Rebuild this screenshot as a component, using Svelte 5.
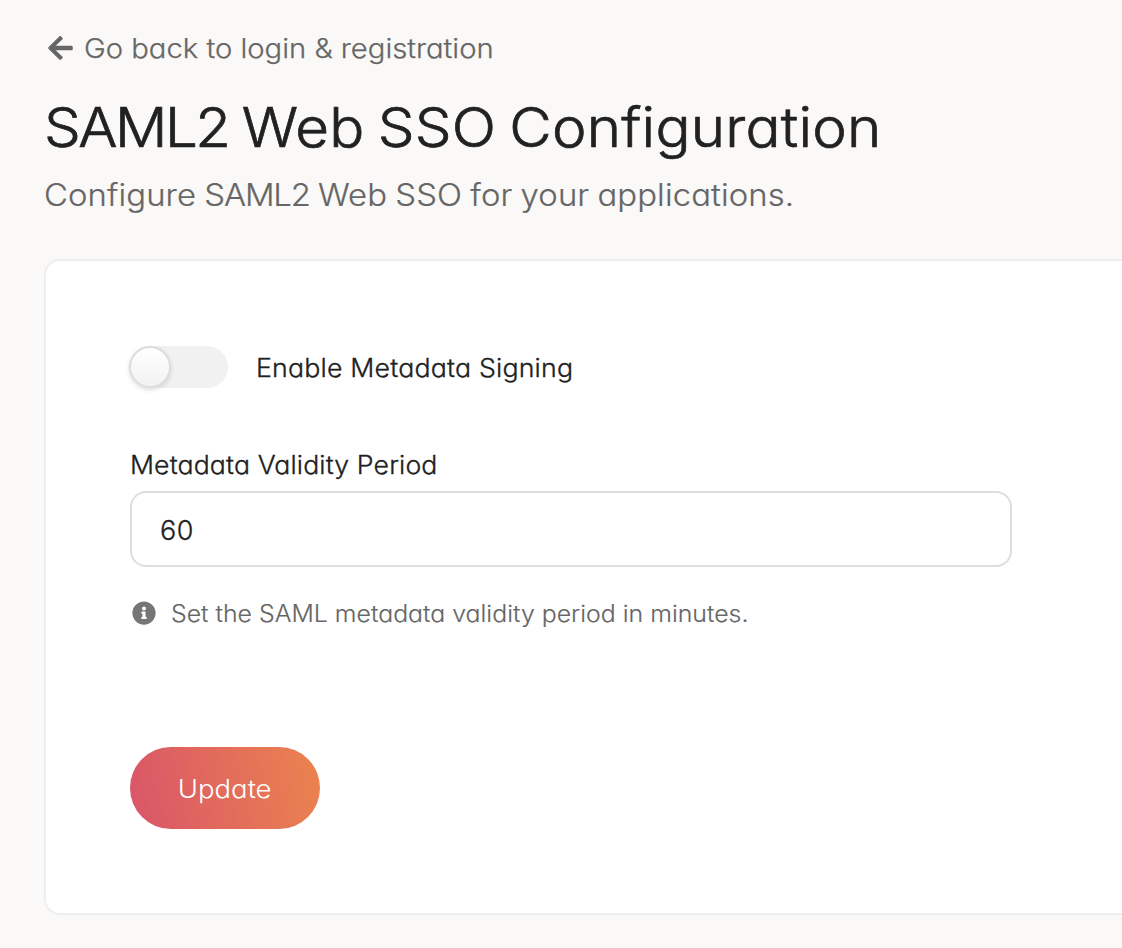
<script>
  let signing = $state(false);
  let period = $state('60');
</script>

<main>
  <a class="back" href="#login">
    <svg viewBox="0 0 448 512" aria-hidden="true"><path d="M257.5 445.1l-22.2 22.2c-9.4 9.4-24.6 9.4-33.9 0L7 273c-9.4-9.4-9.4-24.6 0-33.9L201.4 44.7c9.4-9.4 24.6-9.4 33.9 0l22.2 22.2c9.5 9.5 9.3 25-.4 34.3L136.6 216H424c13.3 0 24 10.7 24 24v32c0 13.3-10.7 24-24 24H136.6l120.5 114.8c9.8 9.3 10 24.8.4 34.3z" /></svg>
    <span>Go back to login &amp; registration</span>
  </a>
  <h1><span class="tight">SAML2</span> Web SSO Configuration</h1>
  <p class="subtitle">Configure <span class="tight">SAML2</span> Web SSO for your applications.</p>

  <section class="card">
    <div class="toggle-row">
      <button class="toggle" class:on={signing} role="switch" aria-checked={signing} aria-labelledby="signing-label" onclick={() => (signing = !signing)}>
        <span class="knob"></span>
      </button>
      <span class="toggle-label" id="signing-label">Enable Metadata Signing</span>
    </div>

    <label for="period">Metadata Validity Period</label>
    <input id="period" type="text" bind:value={period} />

    <div class="hint">
      <svg viewBox="0 0 512 512" aria-hidden="true"><path d="M256 8C119.043 8 8 119.083 8 256c0 136.997 111.043 248 248 248s248-111.003 248-248C504 119.083 392.957 8 256 8zm0 110c23.196 0 42 18.804 42 42s-18.804 42-42 42-42-18.804-42-42 18.804-42 42-42zm56 254c0 6.627-5.373 12-12 12h-88c-6.627 0-12-5.373-12-12v-24c0-6.627 5.373-12 12-12h12v-64h-12c-6.627 0-12-5.373-12-12v-24c0-6.627 5.373-12 12-12h64c6.627 0 12 5.373 12 12v100h12c6.627 0 12 5.373 12 12v24z" /></svg>
      <span>Set the SAML metadata validity period in minutes.</span>
    </div>

    <button class="update"><span>Update</span></button>
  </section>
</main>

<style>
  :global(body) {
    margin: 0;
    background: #faf9f7;
    overflow: hidden;
  }
  main {
    box-sizing: border-box;
    width: 1122px;
    height: 948px;
    padding: 28px 0 0 44px;
    overflow: hidden;
    font-family: Inter, "Open Sans", sans-serif;
    font-feature-settings: "cv11" 1;
    color: #212121;
    white-space: nowrap;
  }
  h1,
  .subtitle,
  .toggle-label,
  label,
  .back span,
  .hint span {
    transform: scaleX(var(--wide));
    transform-origin: 0 50%;
  }
  .back {
    --wide: 1.082;
    display: flex;
    align-items: center;
    height: 40px;
    padding-left: 4px;
    gap: 11px;
    color: #666;
    text-decoration: none;
    font-size: 27px;
    font-weight: 300;
    line-height: 40px;
    -webkit-text-stroke: 0.25px currentColor;
  }
  .back svg {
    width: 25px;
    height: 28px;
    fill: #666;
    stroke: none;
  }
  .back span {
    padding-top: 1px;
  }
  .hint span {
    padding-top: 2px;
  }
  h1 {
    --wide: 1.06;
    width: 900px;
    margin: 27px 0 0;
    font-size: 55px;
    font-weight: 300;
    letter-spacing: 0.2px;
    word-spacing: -3.3px;
    line-height: 64px;
    -webkit-text-stroke: 0.7px currentColor;
  }
  h1 .tight {
    letter-spacing: -2.4px;
  }
  .subtitle {
    --wide: 1.06;
    width: 900px;
    margin: 16px 0 44px;
    color: #666;
    font-size: 31px;
    font-weight: 300;
    letter-spacing: 0.1px;
    word-spacing: -1.1px;
    line-height: 40px;
    -webkit-text-stroke: 0.2px currentColor;
  }
  .subtitle .tight {
    letter-spacing: -1.1px;
  }
  .card {
    box-sizing: border-box;
    width: 1200px;
    height: 656px;
    padding: 85px 84px 0;
    border: 2px solid #eceef0;
    border-radius: 16px;
    background: #fff;
  }
  .toggle-row {
    display: flex;
    align-items: center;
    gap: 28px;
    height: 42px;
    margin-left: -1px;
  }
  .toggle {
    width: 99px;
    height: 42px;
    padding: 0;
    border: 0;
    border-radius: 21px;
    background: #f1f1f1;
    text-align: left;
  }
  .toggle.on {
    background: #e16c62;
  }
  .knob {
    display: block;
    box-sizing: border-box;
    width: 42px;
    height: 42px;
    border: 2px solid #dcdcdc;
    border-radius: 50%;
    background: linear-gradient(#fff, #f2f2f2);
    box-shadow: 0 2px 4px rgba(34, 36, 38, 0.15);
  }
  .toggle.on .knob {
    margin-left: auto;
  }
  .toggle-label {
    --wide: 1.07;
    padding-top: 2px;
    font-size: 25px;
    font-weight: 300;
    letter-spacing: 0.16px;
    -webkit-text-stroke: 0.3px currentColor;
  }
  label {
    --wide: 1.067;
    display: block;
    width: 600px;
    margin: 59px 0 8px;
    font-size: 25px;
    font-weight: 300;
    letter-spacing: 0.1px;
    line-height: 36px;
    -webkit-text-stroke: 0.3px currentColor;
  }
  input {
    display: block;
    box-sizing: border-box;
    width: 882px;
    height: 76px;
    padding: 2px 28px 0;
    border: 2px solid #dedede;
    border-radius: 16px;
    outline: 0;
    background: #fff;
    color: #212121;
    font: 300 27px Inter, "Open Sans", sans-serif;
    letter-spacing: 0.4px;
    -webkit-text-stroke: 0.3px currentColor;
  }
  .hint {
    --wide: 1.058;
    display: flex;
    align-items: center;
    gap: 15px;
    height: 36px;
    margin: 28px 0 116px;
    padding-left: 2px;
    color: #666;
    font-size: 23.5px;
    font-weight: 300;
    line-height: 36px;
    -webkit-text-stroke: 0.15px currentColor;
  }
  .hint svg {
    width: 24px;
    height: 24px;
    fill: #767676;
    stroke: none;
  }
  .update {
    display: flex;
    align-items: center;
    justify-content: center;
    width: 190px;
    height: 82px;
    padding: 2px 0 0;
    border: 0;
    border-radius: 41px;
    background: linear-gradient(77deg, #da5768 5%, #ea814f 95%);
    color: #fff;
    font: 300 25px Inter, "Open Sans", sans-serif;
    font-feature-settings: "cv11" 1;
  }
  .update span {
    transform: scaleX(1.1);
  }
</style>
